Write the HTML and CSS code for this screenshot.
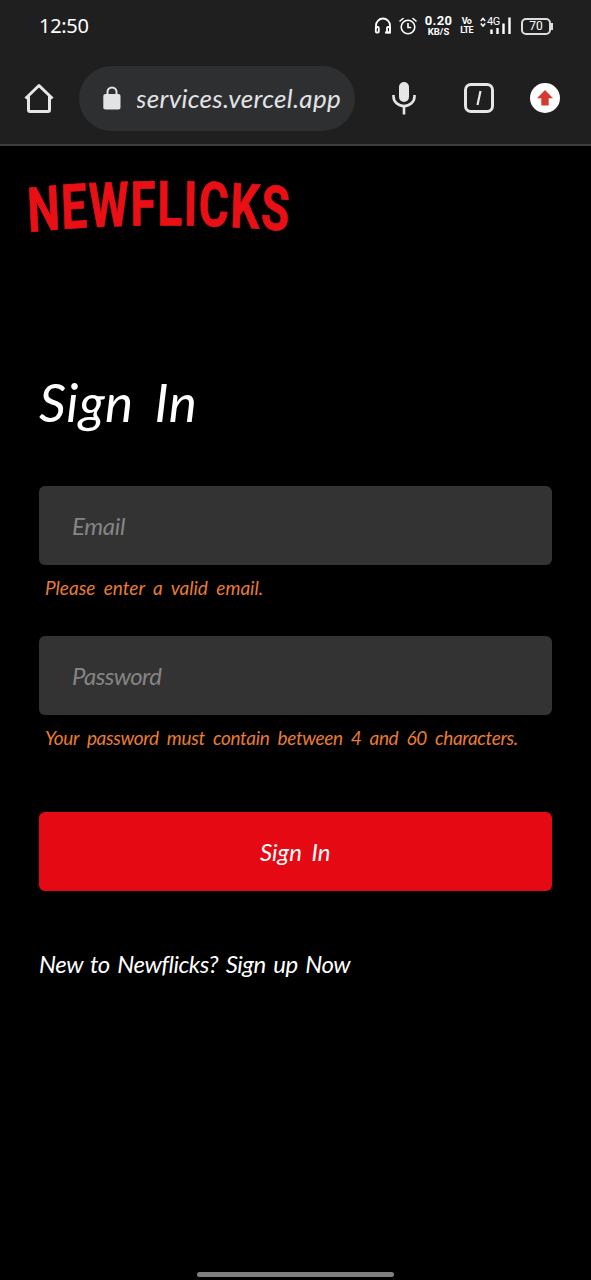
FILE: index.html
```html
<!DOCTYPE html>
<html lang="en">
<head>
<meta charset="utf-8">
<title>Newflicks</title>
<link rel="stylesheet" href="styles.css">
</head>
<body>
<header class="chrome">
  <div class="status">
    <span class="clock">12:50</span>
    <div class="indicators">
      <svg class="headset" width="18" height="18" viewBox="0 0 18 18"><path d="M2 12V8.500a7 7 0 0 1 14 0V15.500H11" fill="none" stroke="#fff" stroke-width="1.800"/><rect x="1.800" y="10" width="3" height="5.500" rx="1" fill="none" stroke="#fff" stroke-width="1.800"/><rect x="13" y="10" width="3" height="5.500" rx="1" fill="none" stroke="#fff" stroke-width="1.800"/></svg>
      <svg class="alarm" width="18" height="18" viewBox="0 0 18 18" fill="none" stroke="#fff" stroke-width="1.600" stroke-linecap="round"><circle cx="9" cy="10" r="6.800"/><path d="M9 6.500V10.500H11.500M1 4L4 1.500M17 4L14 1.500"/></svg>
      <div class="speed"><span class="rate">0.20</span><span class="unit">KB/S</span></div>
      <div class="volte"><span>Vo</span><span>LTE</span></div>
      <div class="signal">
        <svg width="32" height="18" viewBox="0 0 32 18"><path d="M0.800 4L3 1.500L5.200 4M0.800 6.500L3 9L5.200 6.500" fill="none" stroke="#fff" stroke-width="1.500"/><path d="M10.300 12.500h2.400V17h-2.400zM16.300 11h2.400v6h-2.400zM22.300 6.500h2.400V17h-2.400zM28.300 0.500h2.400V17h-2.400z" fill="#fff"/></svg>
        <span class="gen">4G</span>
      </div>
      <div class="battery">70</div>
    </div>
  </div>
  <div class="toolbar">
    <svg class="home" width="32" height="32" viewBox="0 0 32 32"><path d="M2.500 16.500L16 3.500L29.500 16.500M5.500 14.500V28Q5.500 29.500 7 29.500H25Q26.500 29.500 26.500 28V14.500" fill="none" stroke="#e6e6e6" stroke-width="3" stroke-linejoin="round"/></svg>
    <div class="address">
      <svg class="lock" width="18" height="24" viewBox="0 0 18 24"><rect x="0.300" y="8" width="17.200" height="15.500" rx="2" fill="#e2e3e6"/><path d="M4.500 9V6a4.500 4.500 0 0 1 9 0V9" fill="none" stroke="#e2e3e6" stroke-width="2"/></svg>
      <div class="url"><span>services.vercel.app</span></div>
    </div>
    <svg class="mic" width="24" height="34" viewBox="0 0 24 34"><rect x="7" y="1" width="10" height="20" rx="5" fill="#e6e6e6"/><path d="M1.500 14V15.500a10.500 9.500 0 0 0 21 0V14M12 25V33.500" fill="none" stroke="#e6e6e6" stroke-width="2.600"/></svg>
    <div class="tabs"><svg width="8" height="16" viewBox="0 0 8 16"><path d="M5.500 1L2.500 15" stroke="#e6e6e6" stroke-width="2.200"/></svg></div>
    <svg class="update" width="30" height="30" viewBox="0 0 30 30"><circle cx="15" cy="15" r="15" fill="#fff"/><path d="M15 7L23 15.300H18.700V22.500H11.300V15.300H7Z" fill="#d53a2f"/></svg>
  </div>
</header>
<main class="page">
  <svg class="logo" width="290" height="90" viewBox="20 160 290 90" role="img" aria-label="Newflicks">
    <g transform="scale(0.74 1)">
      <path id="arc" d="M38.500 232Q214 219 399 231.500" fill="none"/>
      <text class="wordmark"><textPath href="#arc" textLength="352" lengthAdjust="spacing">NEWFLICKS</textPath></text>
    </g>
  </svg>
  <form class="form">
    <h1 class="title">Sign In</h1>
    <div class="field"><span class="ph-email">Email</span></div>
    <p class="error error-email">Please enter a valid email.</p>
    <div class="field"><span class="ph-password">Password</span></div>
    <p class="error error-password">Your password must contain between 4 and 60 characters.</p>
    <button class="submit" type="button">Sign In</button>
    <p class="signup">New to Newflicks? Sign up Now</p>
  </form>
</main>
<div class="gesture"></div>
</body>
</html>
```
FILE: styles.css
```css
* { box-sizing: border-box; }
body {
  margin: 0;
  width: 591px;
  height: 1280px;
  overflow: hidden;
  display: flex;
  flex-direction: column;
  background: #000;
  color: #fff;
  font-family: Lato, sans-serif;
  font-variant-ligatures: none;
}
.chrome {
  height: 146px;
  flex: none;
  background: #1f1f1f;
  border-bottom: 2px solid #3b3c3d;
}
.status {
  height: 52px;
  padding: 0 38px 0 39px;
  display: flex;
  align-items: center;
  justify-content: space-between;
}
.clock { font: 400 20px/24px "Noto Sans", sans-serif; letter-spacing: -0.3px; }
.indicators { display: flex; align-items: center; }
.headset { margin-right: 7px; }
.alarm { margin-right: 7px; }
.speed {
  width: 29px;
  margin-right: 7px;
  display: flex;
  flex-direction: column;
  align-items: center;
  font-family: Roboto, sans-serif;
  font-weight: 700;
}
.rate { font-size: 13px; line-height: 11px; letter-spacing: 0.4px; }
.unit { font-size: 9.5px; line-height: 11px; }
.volte {
  width: 13px;
  margin-right: 7px;
  display: flex;
  flex-direction: column;
  align-items: center;
  font: 700 9px/9px Roboto, sans-serif;
  letter-spacing: -0.6px;
}
.signal { position: relative; width: 32px; height: 18px; margin-right: 9px; }
.signal svg { display: block; }
.gen { position: absolute; left: 7px; top: -1px; font: 11px/12px Roboto, sans-serif; letter-spacing: -0.5px; }
.battery {
  position: relative;
  width: 30px;
  height: 17px;
  border: 2px solid #ddd;
  border-radius: 5px;
  font: 12px/13px Roboto, sans-serif;
  text-align: center;
  margin-right: 2px;
}
.battery::after { content: ""; position: absolute; right: -4px; top: 3px; width: 2px; height: 7px; background: #ddd; }
.toolbar { height: 92px; padding: 0 31px 0 23px; display: flex; align-items: center; }
.home { margin-right: 24px; }
.address {
  width: 276px;
  height: 65px;
  border-radius: 33px;
  background: #2e2f31;
  padding: 0 14px 0 24px;
  display: flex;
  align-items: center;
  margin-right: 37px;
}
.lock { margin-right: 16px; flex: none; }
.url {
  flex: 1;
  overflow: hidden;
  display: flex;
  justify-content: flex-end;
  font-size: 26px;
  line-height: 36px;
  font-style: italic;
  letter-spacing: 0.3px;
  color: #e2e3e6;
}
.url span { white-space: nowrap; }
.mic { margin-right: 48px; }
.tabs {
  width: 30px;
  height: 30px;
  border: 3px solid #e6e6e6;
  border-radius: 7px;
  display: flex;
  align-items: center;
  justify-content: center;
  margin-right: 36px;
}
.page { flex: 1; padding: 14px 39px 0; }
.logo { display: block; margin-left: -19px; }
.wordmark { font: 700 62px Roboto, sans-serif; fill: #e91015; stroke: #e91015; stroke-width: 0.8px; }
.form { font-style: italic; padding-top: 119px; }
.title { margin: 0 0 51px; font-size: 53px; line-height: 66px; font-weight: 400; letter-spacing: 0.5px; word-spacing: 8px; }
.field {
  height: 78.5px;
  width: 512.5px;
  border-radius: 6px;
  background: #333;
  color: #858585;
  font-size: 24px;
  line-height: 79px;
  padding-left: 33px;
}
.ph-email { letter-spacing: -0.3px; }
.ph-password { letter-spacing: -0.6px; }
.error { margin: 8px 0 33.5px; padding-left: 6px; font-size: 19px; line-height: 30px; color: #e87c33; white-space: nowrap; }
.error-email { word-spacing: 4px; }
.error-password { letter-spacing: -0.35px; word-spacing: 4px; }
.submit {
  display: block;
  width: 512.5px;
  height: 79px;
  margin-top: 59px;
  border: 0;
  border-radius: 6px;
  background: #e50914;
  color: #fff;
  font: italic 24px Lato, sans-serif;
  word-spacing: 4px;
}
.signup { margin: 57px 0 0; font-size: 24px; line-height: 32px; white-space: nowrap; letter-spacing: -0.5px; word-spacing: 2.5px; }
.gesture { flex: none; width: 197px; height: 5px; border-radius: 3px; background: #808080; margin: 0 auto 3px 197px; }
```
